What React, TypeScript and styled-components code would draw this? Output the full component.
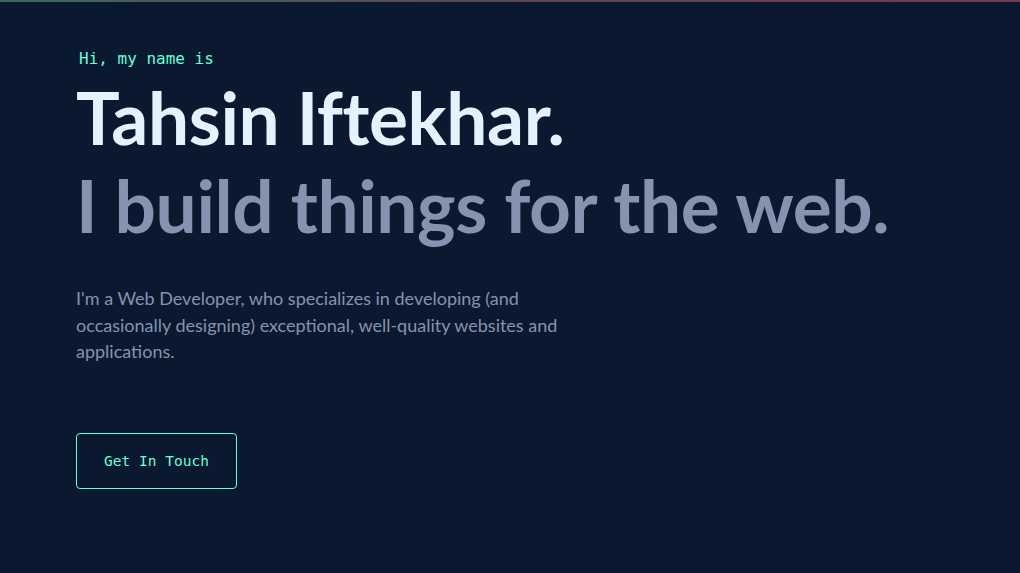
import styled, { createGlobalStyle } from 'styled-components'

const GlobalStyle = createGlobalStyle`
    html, body {
        margin: 0;
        padding: 0;
        background: #0a192f;
    }
    * {
        box-sizing: border-box;
    }
`

const Page = styled.main`
    min-height: 573px;
    background: #0a192f;
    border-top: 2px solid transparent;
    border-image: linear-gradient(90deg, #3b6a58 0%, #5a4a48 45%, #7a3656 100%) 1;
`

const Hero = styled.section`
    display: flex;
    flex-direction: column;
    align-items: flex-start;
    padding: 47px 0 0 76px;
`

const Greeting = styled.h1`
    margin: 0 0 4px 3px;
    color: #64ffda;
    font-family: "DejaVu Sans Mono", "Liberation Mono", monospace;
    font-size: 16px;
    font-weight: 400;
    line-height: 20px;
`

const BigHeading = styled.h2<{ muted?: boolean }>`
    margin: 0;
    color: ${p => (p.muted ? '#8892b0' : '#e6f1ff')};
    font-family: Lato, "Noto Sans", sans-serif;
    font-size: 73px;
    font-weight: 700;
    line-height: 88px;
    letter-spacing: -0.4px;
`

const Intro = styled.p`
    margin: 36px 0 0;
    max-width: 500px;
    color: #8892b0;
    font-family: Lato, "Noto Sans", sans-serif;
    font-size: 18px;
    line-height: 26.5px;
`

const ContactButton = styled.a`
    margin-top: 68px;
    display: inline-flex;
    align-items: center;
    justify-content: center;
    width: 161px;
    height: 56px;
    border: 1px solid #64ffda;
    border-radius: 4px;
    color: #64ffda;
    font-family: "DejaVu Sans Mono", "Liberation Mono", monospace;
    font-size: 14.5px;
    text-decoration: none;
`

export default function App() {
    return (<Page>
        <GlobalStyle />
        <Hero>
            <Greeting>Hi, my name is</Greeting>
            <BigHeading>Tahsin Iftekhar.</BigHeading>
            <BigHeading muted>I build things for the web.</BigHeading>
            <Intro>
                I'm a Web Developer, who specializes in developing (and occasionally designing) exceptional, well-quality websites and applications.
            </Intro>
            <ContactButton href="#contact">Get In Touch</ContactButton>
        </Hero>
    </Page>)
}
